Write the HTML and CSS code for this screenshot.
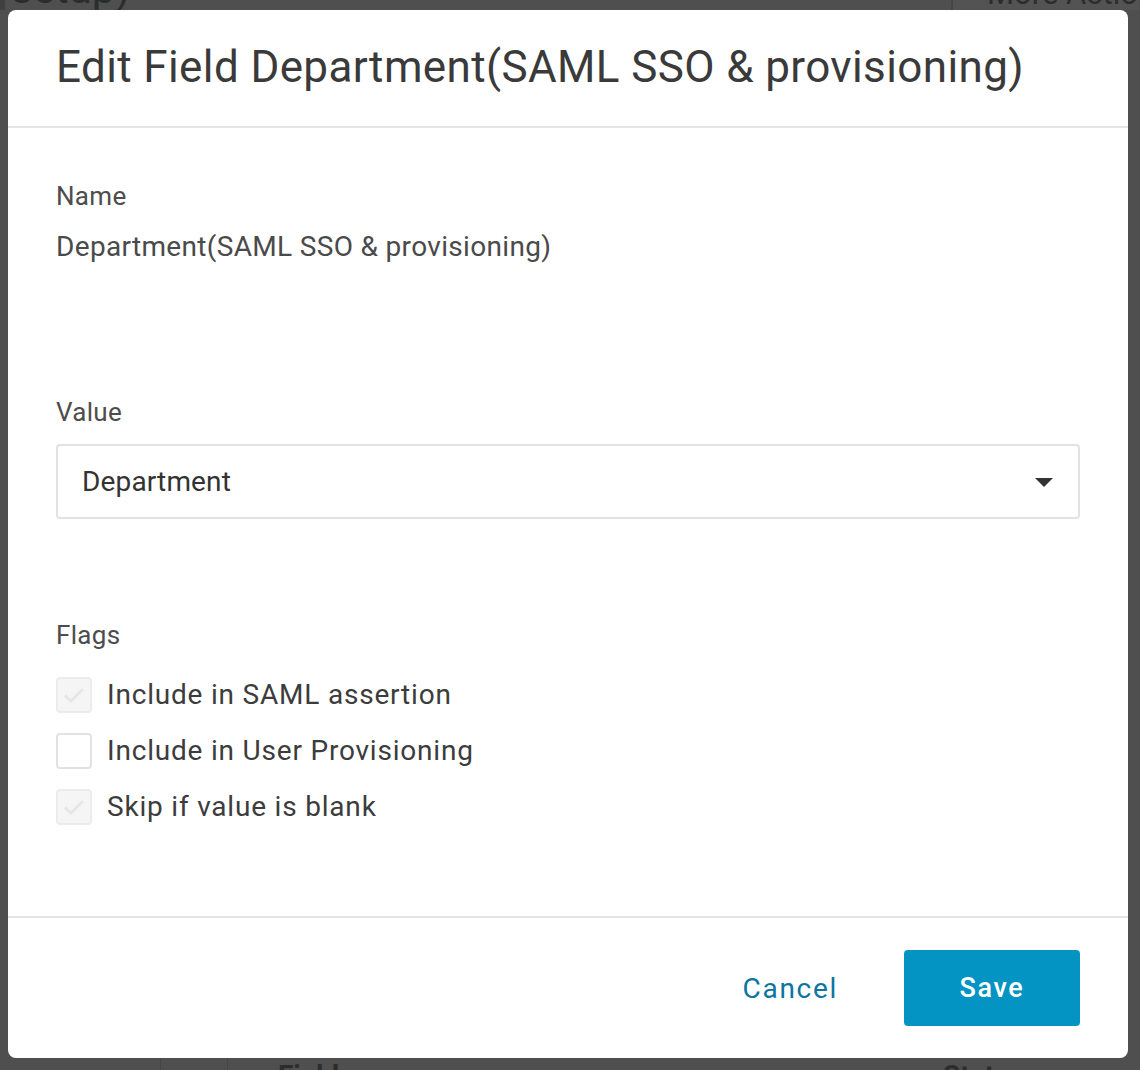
FILE: index.html
```html
<!doctype html>
<html>
<head>
<meta charset="utf-8">
<link rel="stylesheet" href="styles.css">
</head>
<body>
	<div class="page">
		<div class="page-top">
			<div class="crumb">setup)</div>
			<div class="more">More Actions</div>
		</div>
		<div class="page-bottom">
			<div class="col col-check"></div>
			<div class="col col-icon"></div>
			<div class="col col-field">Field</div>
			<div class="col col-status">Status</div>
		</div>
	</div>

	<div class="overlay">
		<div class="modal">
			<div class="modal-header">
				<h1>Edit Field Department(SAML SSO &amp; provisioning)</h1>
			</div>
			<div class="modal-body">
				<div class="field">
					<div class="label">Name</div>
					<div class="static">Department(SAML SSO &amp; provisioning)</div>
				</div>
				<div class="field field-value">
					<div class="label">Value</div>
					<div class="select">
						<span>Department</span>
						<svg class="caret" width="18" height="10" viewBox="0 0 18 10"><path d="M0 0 L18 0 L9 9 Z" fill="#333"/></svg>
					</div>
				</div>
				<div class="field field-flags">
					<div class="label">Flags</div>
					<div class="flags">
						<label class="check disabled">
							<span class="box"><svg width="26" height="26" viewBox="0 0 26 26"><path d="M4 13.5 L10 19 L22 7" fill="none" stroke="#e6e6e6" stroke-width="2.8"/></svg></span>
							Include in SAML assertion
						</label>
						<label class="check">
							<span class="box"></span>
							Include in User Provisioning
						</label>
						<label class="check disabled">
							<span class="box"><svg width="26" height="26" viewBox="0 0 26 26"><path d="M4 13.5 L10 19 L22 7" fill="none" stroke="#e6e6e6" stroke-width="2.8"/></svg></span>
							Skip if value is blank
						</label>
					</div>
				</div>
			</div>
			<div class="modal-footer">
				<button class="btn-link">Cancel</button>
				<button class="btn-primary">Save</button>
			</div>
		</div>
	</div>
</body>
</html>
```

FILE: styles.css
```css
html, body {
	margin: 0;
	height: 100%;
}

body {
	font-family: Roboto, "Liberation Sans", sans-serif;
	background: #4e4f4e;
	overflow: hidden;
}

.page {
	height: 1070px;
	display: flex;
	flex-direction: column;
	justify-content: space-between;
	color: #2b2d2c;
}

.page-top {
	height: 10px;
	display: flex;
	overflow: hidden;
}

.crumb {
	font-size: 42px;
	line-height: 1;
	margin-top: -32px;
	padding-left: 6px;
	border-left: 5px solid #3f4140;
	width: 940px;
}

.more {
	flex: 1;
	font-size: 31px;
	line-height: 1;
	margin-top: -22px;
	padding-left: 34px;
	border-left: 2px solid #454746;
	background: #525352;
	white-space: nowrap;
	overflow: hidden;
}

.page-bottom {
	height: 12px;
	display: flex;
	overflow: hidden;
}

.col {
	font-size: 28px;
	font-weight: bold;
	line-height: 1;
	padding-top: 4px;
}

.col-check {
	width: 160px;
	border-right: 1px solid #454746;
}

.col-icon {
	width: 66px;
	border-right: 1px solid #454746;
}

.col-field {
	width: 665px;
	padding-left: 50px;
}

.overlay {
	position: absolute;
	left: 8px;
	top: 10px;
	width: 1120px;
	height: 1048px;
}

.modal {
	background: #fff;
	border-radius: 8px;
	height: 100%;
	display: flex;
	flex-direction: column;
}

.modal-header {
	height: 116px;
	border-bottom: 2px solid #e4e4e4;
	padding: 0 48px;
	display: flex;
	align-items: center;
}

.modal-header h1 {
	margin: 0;
	font-size: 44px;
	font-weight: normal;
	color: #3a3a3a;
	letter-spacing: 0.38px;
	white-space: nowrap;
	position: relative;
	top: -1px;
}

.modal-body {
	flex: 1;
	padding: 52px 48px 0;
	color: #454545;
}

.label {
	font-size: 26px;
	line-height: 32px;
	color: #4d4d4d;
	letter-spacing: 0.3px;
}

.static {
	font-size: 28px;
	line-height: 32px;
	margin-top: 19px;
	color: #4a4a4a;
	letter-spacing: 0.33px;
}

.field-value {
	margin-top: 133px;
}

.select {
	margin-top: 16px;
	height: 71px;
	border: 2px solid #e2e2e2;
	border-radius: 4px;
	display: flex;
	align-items: center;
	justify-content: space-between;
	padding: 0 25px 0 24px;
	font-size: 28px;
	color: #333;
	letter-spacing: 0.15px;
}

.caret {
	display: block;
	margin-top: 2px;
}

.field-flags {
	margin-top: 100px;
}

.flags {
	margin-top: 26px;
	display: flex;
	flex-direction: column;
	gap: 20px;
}

.check {
	display: flex;
	align-items: center;
	gap: 15px;
	font-size: 28px;
	line-height: 36px;
	color: #3c3c3c;
	letter-spacing: 0.8px;
}

.box {
	width: 32px;
	height: 32px;
	border: 2px solid #e2e2e2;
	border-radius: 4px;
	background: #fff;
	display: flex;
	align-items: center;
	justify-content: center;
}

.check.disabled .box {
	background: #f5f5f5;
	border-color: #ececec;
}

.modal-footer {
	height: 140px;
	border-top: 2px solid #e4e4e4;
	display: flex;
	align-items: center;
	justify-content: flex-end;
	padding: 0 48px 0 0;
	gap: 66px;
}

.btn-link {
	background: none;
	border: none;
	font-family: inherit;
	font-size: 28px;
	color: #0a76a0;
	letter-spacing: 1.7px;
	padding: 0;
	margin-top: 0;
}

.btn-primary {
	width: 176px;
	height: 76px;
	background: #0394c4;
	border: none;
	border-radius: 4px;
	color: #fff;
	font-family: inherit;
	font-size: 27px;
	font-weight: 500;
	letter-spacing: 1.6px;
}
```
